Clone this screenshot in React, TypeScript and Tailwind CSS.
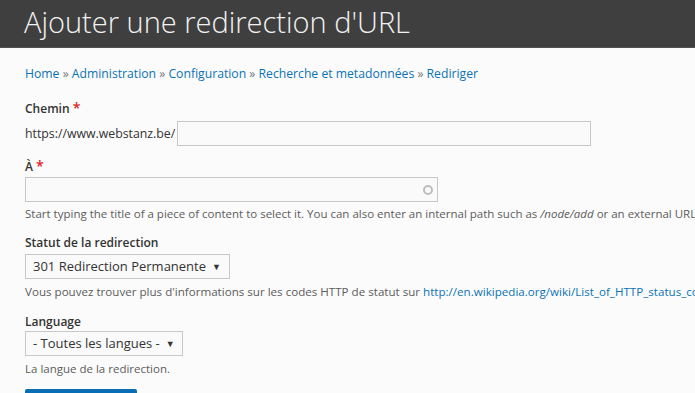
import React from "react";

export default function App() {
  return (
    <div className="w-[695px] h-[393px] overflow-hidden bg-[#fbfbfb] text-[#333]" style={{ fontFamily: '"Open Sans", "Liberation Sans", sans-serif' }}>
      <header className="h-[48px] bg-[#3f3f3f] border-b border-[#525252] pl-[24px] flex items-center">
        <h1 className="text-[29px] font-light text-[#f2f2f2] leading-none -mt-[4px]">Ajouter une redirection d'URL</h1>
      </header>
      <div className="pl-[25px] pt-[17px]">
        <nav className="text-[12.2px] text-[#0b73b5] leading-[18px] whitespace-nowrap">
          Home <span className="text-[#777]">»</span> Administration <span className="text-[#777]">»</span> Configuration <span className="text-[#777]">»</span> Recherche et metadonnées <span className="text-[#777]">»</span> Rediriger
        </nav>
        <div className="mt-[17px]">
          <div className="text-[12px] font-semibold leading-[16px] text-[#333]">
            Chemin <span className="text-[#dc2323] text-[14px]">*</span>
          </div>
          <div className="flex items-center mt-[4px]">
            <span className="text-[12.3px] leading-[16px] text-[#333]">https://www.webstanz.be/</span>
            <div className="ml-[2px] w-[414px] h-[25px] border border-[#c8c8c8] bg-[#fafafa]" />
          </div>
        </div>
        <div className="mt-[12px]">
          <div className="text-[12px] font-semibold leading-[16px] text-[#333]">
            À <span className="text-[#dc2323] text-[14px]">*</span>
          </div>
          <div className="mt-[2px] w-[413px] h-[25px] border border-[#c8c8c8] bg-[#fafafa] flex items-center justify-end pr-[4px]">
            <span className="w-[10px] h-[10px] rounded-full border-2 border-[#bdbdbd]" />
          </div>
          <div className="mt-[4px] text-[11.5px] leading-[15px] text-[#5c5c5c] whitespace-nowrap">
            Start typing the title of a piece of content to select it. You can also enter an internal path such as <em>/node/add</em> or an external URL such as http://example.com.
          </div>
        </div>
        <div className="mt-[14px]">
          <div className="text-[12px] font-semibold leading-[16px] text-[#333]">Statut de la redirection</div>
          <div className="mt-[3px] w-[205px] h-[25px] border border-[#c8c8c8] bg-[#fafafa] flex items-center pl-[7px] text-[13px] text-[#333]">
            301 Redirection Permanente <span className="ml-[6px] text-[9px]">▼</span>
          </div>
          <div className="mt-[5px] text-[11.6px] leading-[15px] text-[#5c5c5c] whitespace-nowrap">
            Vous pouvez trouver plus d'informations sur les codes HTTP de statut sur <span className="text-[#0b73b5]">http://en.wikipedia.org/wiki/List_of_HTTP_status_codes</span>
          </div>
        </div>
        <div className="mt-[15px]">
          <div className="text-[12px] font-semibold leading-[16px] text-[#333]">Language</div>
          <div className="mt-[1px] w-[158px] h-[25px] border border-[#c8c8c8] bg-[#fafafa] flex items-center pl-[7px] text-[13px] text-[#333]">
            - Toutes les langues - <span className="ml-[6px] text-[9px]">▼</span>
          </div>
          <div className="mt-[5px] text-[11.5px] leading-[15px] text-[#5c5c5c] whitespace-nowrap">La langue de la redirection.</div>
        </div>
        <div className="mt-[13px] w-[112px] h-[30px] bg-[#0a6eb4] rounded-t-[2px]" />
      </div>
    </div>
  );
}
